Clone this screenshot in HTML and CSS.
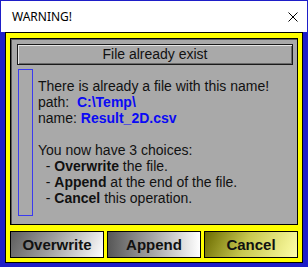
FILE: index.html
```html
<!DOCTYPE html>
<html>
<head>
<meta charset="utf-8">
<link rel="stylesheet" href="styles.css">
</head>
<body>
<div class="window">
  <div class="titlebar">
    <span class="title">WARNING!</span>
    <svg class="close" width="10" height="10" viewBox="0 0 10 10"><path d="M0.5 0.5 L9.5 9.5 M9.5 0.5 L0.5 9.5" stroke="#000" stroke-width="1"/></svg>
  </div>
  <div class="frame">
    <div class="panel">
      <div class="heading">File already exist</div>
      <div class="body">
        <div class="marker"></div>
        <div class="message">
          <div class="line">There is already a file with this name!</div>
          <div class="line">path:&nbsp;&nbsp;<b class="val">C:\Temp\</b></div>
          <div class="line">name: <b class="val">Result_2D.csv</b></div>
          <div class="line">&nbsp;</div>
          <div class="line">You now have 3 choices:</div>
          <div class="line">&nbsp;&nbsp;- <b>Overwrite</b> the file.</div>
          <div class="line">&nbsp;&nbsp;- <b>Append</b> at the end of the file.</div>
          <div class="line">&nbsp;&nbsp;- <b>Cancel</b> this operation.</div>
        </div>
      </div>
    </div>
    <div class="buttons">
      <div class="btn btn-gray">Overwrite</div>
      <div class="btn btn-gray2">Append</div>
      <div class="btn btn-yellow">Cancel</div>
    </div>
  </div>
</div>
</body>
</html>
```

FILE: styles.css
```css
html, body {
  margin: 0;
  padding: 0;
}
body {
  width: 308px;
  height: 267px;
  background: #1e1ec8;
  overflow: hidden;
}
.window {
  width: 308px;
  height: 267px;
  box-sizing: border-box;
  padding: 1px 1px 0 1px;
  display: flex;
  flex-direction: column;
}
.titlebar {
  height: 31px;
  background: #fff;
  display: flex;
  align-items: center;
  justify-content: space-between;
  padding: 0 9px 0 11px;
}
.title {
  font-family: "Noto Sans", sans-serif;
  font-size: 12px;
  color: #000;
}
.close {
  display: block;
}
.frame {
  margin: 0 4px;
  height: 231px;
  box-sizing: border-box;
  border: 1px solid #000;
  background: #ffff00;
  padding: 5px 4px 4px 4px;
  display: flex;
  flex-direction: column;
  gap: 6px;
}
.panel {
  flex: 1;
  background: #a9a9a9;
  border: 1px solid #000;
  box-shadow: inset 1px 1px 0 #5a5a5a;
  padding: 5px 4px 4px 6px;
  display: flex;
  flex-direction: column;
  gap: 4px;
  font-family: "Liberation Sans", Arial, sans-serif;
  font-size: 14px;
  color: #111;
}
.heading {
  height: 19px;
  line-height: 19px;
  text-align: center;
  border: 1px solid #1a1a1a;
  box-shadow: inset 1px 1px 0 #e6e6e6, inset -1px -1px 0 #6a6a6a;
  background: #a9a9a9;
}
.body {
  display: flex;
  gap: 5px;
  padding-left: 1px;
}
.marker {
  width: 13px;
  height: 145px;
  border: 1px solid #3a3af0;
}
.message {
  padding-top: 9px;
}
.line {
  height: 16px;
  line-height: 16px;
  white-space: nowrap;
}
.val {
  color: #0a0af5;
}
.buttons {
  height: 27px;
  display: grid;
  grid-template-columns: 1fr 1fr 1fr;
  gap: 3px;
}
.btn {
  border: 1px solid #000;
  display: flex;
  align-items: center;
  justify-content: center;
  font-family: "Liberation Sans", Arial, sans-serif;
  font-weight: bold;
  font-size: 15px;
  color: #111;
}
.btn-gray {
  background: linear-gradient(115deg, #5e5e5e 0%, #a0a0a0 45%, #ffffff 100%);
}
.btn-gray2 {
  background: linear-gradient(90deg, #575757 0%, #a8a8a8 50%, #ffffff 100%);
}
.btn-yellow {
  background: linear-gradient(115deg, #6b6b00 0%, #c8c850 45%, #ffffa8 100%);
}
```
